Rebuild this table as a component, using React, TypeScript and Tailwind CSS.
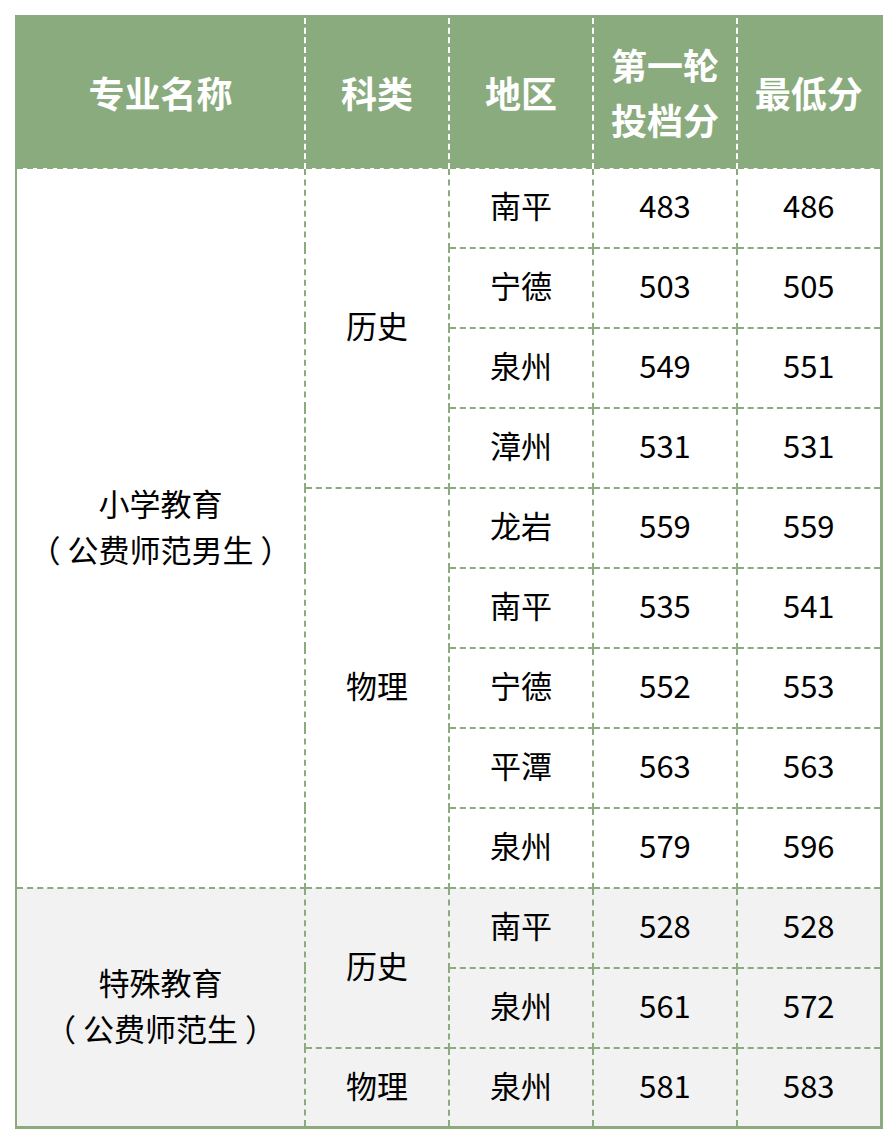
import React from 'react';

type Row = { subject?: string; span?: number; region: string; first: number; min: number };

const groups: { major: string[]; gray: boolean; rows: Row[] }[] = [
  {
    major: ['小学教育', '（ 公费师范男生 ）'],
    gray: false,
    rows: [
      { subject: '历史', span: 4, region: '南平', first: 483, min: 486 },
      { region: '宁德', first: 503, min: 505 },
      { region: '泉州', first: 549, min: 551 },
      { region: '漳州', first: 531, min: 531 },
      { subject: '物理', span: 5, region: '龙岩', first: 559, min: 559 },
      { region: '南平', first: 535, min: 541 },
      { region: '宁德', first: 552, min: 553 },
      { region: '平潭', first: 563, min: 563 },
      { region: '泉州', first: 579, min: 596 },
    ],
  },
  {
    major: ['特殊教育', '（ 公费师范生 ）'],
    gray: true,
    rows: [
      { subject: '历史', span: 2, region: '南平', first: 528, min: 528 },
      { region: '泉州', first: 561, min: 572 },
      { subject: '物理', span: 1, region: '泉州', first: 581, min: 583 },
    ],
  },
];

const cell = 'border-2 border-dashed border-[#8aab7e] text-center align-middle p-0 pb-[4px]';
const head = 'border-x-2 border-dashed border-white text-center align-middle p-0 font-bold text-white text-[36px] leading-[55px]';

export default function App() {
  return (
    <div className="w-[896px] h-[1144px] bg-white pt-[15px] pl-[15px]" style={{ fontFamily: '"Noto Sans CJK SC", "Noto Sans", sans-serif' }}>
      <table className="table-fixed border-collapse w-[865px] border-[3px] border-l-2 border-solid border-[#8aab7e] text-black text-[31px]">
        <colgroup>
          <col className="w-[289px]" />
          <col className="w-[144px]" />
          <col className="w-[144px]" />
          <col className="w-[144px]" />
          <col className="w-[144px]" />
        </colgroup>
        <thead>
          <tr className="h-[151px] bg-[#8aab7e]">
            <th className={head}>专业名称</th>
            <th className={head}>科类</th>
            <th className={head}>地区</th>
            <th className={head}>第一轮<br />投档分</th>
            <th className={head}>最低分</th>
          </tr>
        </thead>
        <tbody>
          {groups.map((g, gi) =>
            g.rows.map((r, ri) => (
              <tr key={`${gi}-${ri}`} className={`h-[80px] ${g.gray ? 'bg-[#f2f2f2]' : 'bg-white'}`}>
                {ri === 0 && (
                  <td rowSpan={g.rows.length} className={`${cell} leading-[46px]`}>
                    <div>{g.major[0]}</div>
                    <div>{g.major[1]}</div>
                  </td>
                )}
                {r.subject && (
                  <td rowSpan={r.span} className={cell}>
                    {r.subject}
                  </td>
                )}
                <td className={cell}>{r.region}</td>
                <td className={cell}>{r.first}</td>
                <td className={cell}>{r.min}</td>
              </tr>
            ))
          )}
        </tbody>
      </table>
    </div>
  );
}
